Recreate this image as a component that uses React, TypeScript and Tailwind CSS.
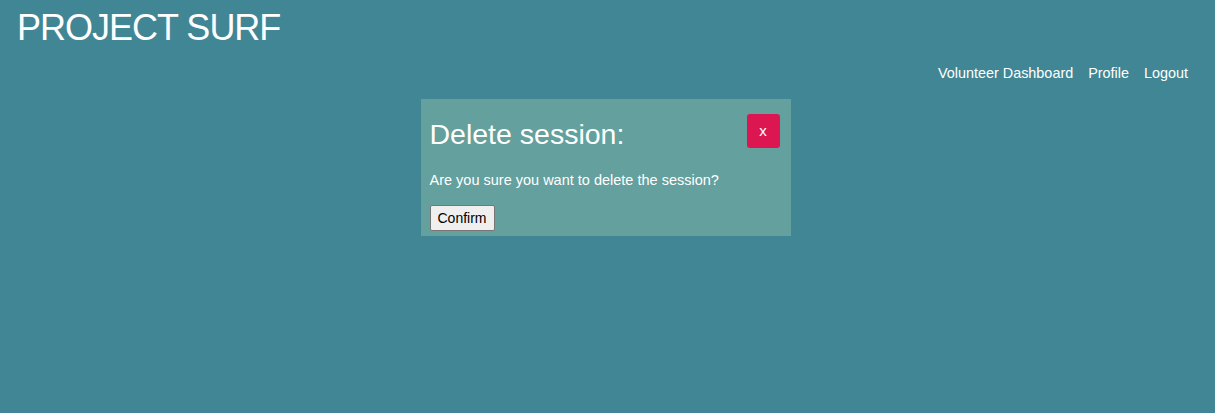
export default function App() {
  return (
    <div className="min-h-[413px] w-full bg-[#418695] text-white" style={{ fontFamily: '"Liberation Sans", Arial, sans-serif' }}>
      <header className="px-[17px] pt-[6px]">
        <h1 className="text-[36px] leading-[44px] font-light tracking-[-1px]">PROJECT SURF</h1>
      </header>
      <nav className="flex justify-end gap-[15px] pr-[27px] pt-[15px] text-[14.4px] leading-[16px]">
        <a>Volunteer Dashboard</a>
        <a>Profile</a>
        <a>Logout</a>
      </nav>
      <div className="flex justify-center pt-[18px] pr-[4px]">
        <div className="w-[370px] bg-[#63a09e] px-[9px] pb-[5px] pt-[15px]">
          <div className="flex items-start justify-between">
            <h2 className="mt-[2px] text-[28.5px] leading-[36px] font-light">Delete session:</h2>
            <button className="mr-[2px] flex h-[34px] w-[33px] items-center justify-center rounded-[3px] bg-[#dc1650] text-[15px] text-white">x</button>
          </div>
          <p className="mt-[20px] text-[14.5px] leading-[16px]">Are you sure you want to delete the session?</p>
          <button className="mt-[17px] h-[26px] border border-[#767676] bg-[#efefef] px-[7px] text-[14px] text-black rounded-[2px]">Confirm</button>
        </div>
      </div>
    </div>
  );
}
